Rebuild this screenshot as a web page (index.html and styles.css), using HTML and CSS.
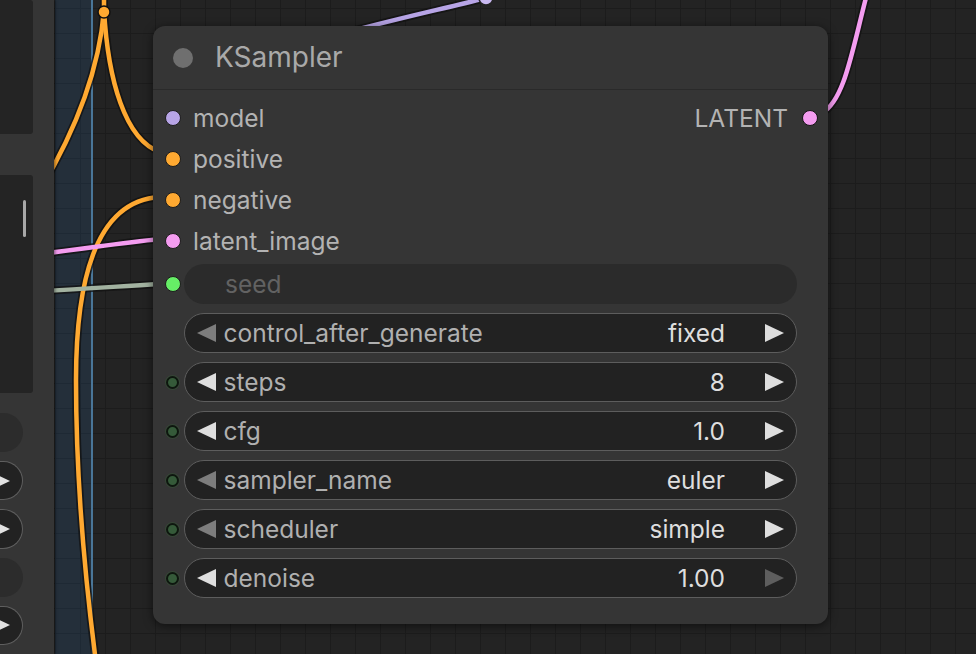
FILE: index.html
```html
<!DOCTYPE html>
<html>
<head>
<meta charset="utf-8">
<link rel="stylesheet" href="styles.css">
</head>
<body>
<div class="canvas">
  <div class="group"></div>

  <svg class="links" width="976" height="654" viewBox="0 0 976 654">
    <g fill="none" stroke="#111" stroke-opacity="0.75" stroke-width="8" stroke-linecap="round">
      <path d="M104,10 C100,60 82,120 40,190"/>
      <path d="M104,10 C108,80 125,140 160,152"/>
      <path d="M104,-20 L104,10"/>
      <path d="M160,197 C105,200 76,260 76,380 C76,480 85,580 97,670"/>
      <path d="M160,239 C120,243 90,248 40,254"/>
      <path d="M160,284 C120,286 90,289 40,291"/>
      <path d="M300,45 C380,22 430,12 486,-2"/>
      <path d="M822,113 C845,100 852,50 868,-10"/>
    </g>
    <g fill="none" stroke-width="4.5" stroke-linecap="round">
      <path stroke="#ffa931" d="M104,10 C100,60 82,120 40,190"/>
      <path stroke="#ffa931" d="M104,10 C108,80 125,140 160,152"/>
      <path stroke="#ffa931" d="M104,-20 L104,10"/>
      <path stroke="#ffa931" d="M160,197 C105,200 76,260 76,380 C76,480 85,580 97,670"/>
      <path stroke="#f49cf0" d="M160,239 C120,243 90,248 40,254"/>
      <path stroke="#a2b2a0" d="M160,284 C120,286 90,289 40,291"/>
      <path stroke="#b7a4e6" d="M300,45 C380,22 430,12 486,-2"/>
      <path stroke="#f49cf0" d="M822,113 C845,100 852,50 868,-10"/>
    </g>
    <circle cx="104" cy="12" r="6" fill="#ffa931" stroke="#111" stroke-width="1.5"/>
    <circle cx="486" cy="-2" r="7" fill="#c8b8f0" stroke="#222" stroke-width="1.5"/>
  </svg>

  <div class="lnode">
    <div class="ltext ltext-top"></div>
    <div class="ltext ltext-mid"><span class="lscroll"></span></div>
    <div class="lwidget plain"></div>
    <div class="lwidget"><svg class="larrow" width="10" height="18" viewBox="0 0 10 18"><polygon points="-9,0 10,9 -9,18" fill="#e2e2e2"/></svg></div>
    <div class="lwidget"><svg class="larrow" width="10" height="18" viewBox="0 0 10 18"><polygon points="-9,0 10,9 -9,18" fill="#e2e2e2"/></svg></div>
    <div class="lwidget plain"></div>
    <div class="lwidget"><svg class="larrow" width="10" height="18" viewBox="0 0 10 18"><polygon points="-9,0 10,9 -9,18" fill="#e2e2e2"/></svg></div>
  </div>

  <div class="ks">
    <div class="ks-title">
      <span class="tdot"></span>
      <span class="ttext">KSampler</span>
    </div>
    <div class="ks-body">
      <div class="io">
        <span class="slot c-model"></span><span class="lbl">model</span>
        <span class="out">LATENT</span><span class="oslot c-latent"></span>
      </div>
      <div class="io"><span class="slot c-cond"></span><span class="lbl">positive</span></div>
      <div class="io"><span class="slot c-cond"></span><span class="lbl">negative</span></div>
      <div class="io"><span class="slot c-latent"></span><span class="lbl">latent_image</span></div>

      <div class="widgets">
        <div class="wrow">
          <span class="wslot"><span class="slot c-int"></span></span>
          <div class="pill seed"><span class="wlabel">seed</span></div>
        </div>
        <div class="wrow">
          <span class="wslot"></span>
          <div class="pill">
            <svg class="arr" width="19" height="18" viewBox="0 0 19 18"><polygon points="0,9 19,0 19,18" class="dim"/></svg>
            <span class="wlabel">control_after_generate</span>
            <span class="wval">fixed</span>
            <svg class="arr" width="19" height="18" viewBox="0 0 19 18"><polygon points="0,0 19,9 0,18" class="bright"/></svg>
          </div>
        </div>
        <div class="wrow">
          <span class="wslot"><span class="ring"></span></span>
          <div class="pill">
            <svg class="arr" width="19" height="18" viewBox="0 0 19 18"><polygon points="0,9 19,0 19,18" class="bright"/></svg>
            <span class="wlabel">steps</span>
            <span class="wval">8</span>
            <svg class="arr" width="19" height="18" viewBox="0 0 19 18"><polygon points="0,0 19,9 0,18" class="bright"/></svg>
          </div>
        </div>
        <div class="wrow">
          <span class="wslot"><span class="ring"></span></span>
          <div class="pill">
            <svg class="arr" width="19" height="18" viewBox="0 0 19 18"><polygon points="0,9 19,0 19,18" class="bright"/></svg>
            <span class="wlabel">cfg</span>
            <span class="wval">1.0</span>
            <svg class="arr" width="19" height="18" viewBox="0 0 19 18"><polygon points="0,0 19,9 0,18" class="bright"/></svg>
          </div>
        </div>
        <div class="wrow">
          <span class="wslot"><span class="ring"></span></span>
          <div class="pill">
            <svg class="arr" width="19" height="18" viewBox="0 0 19 18"><polygon points="0,9 19,0 19,18" class="dim"/></svg>
            <span class="wlabel">sampler_name</span>
            <span class="wval">euler</span>
            <svg class="arr" width="19" height="18" viewBox="0 0 19 18"><polygon points="0,0 19,9 0,18" class="bright"/></svg>
          </div>
        </div>
        <div class="wrow">
          <span class="wslot"><span class="ring"></span></span>
          <div class="pill">
            <svg class="arr" width="19" height="18" viewBox="0 0 19 18"><polygon points="0,9 19,0 19,18" class="dim"/></svg>
            <span class="wlabel">scheduler</span>
            <span class="wval">simple</span>
            <svg class="arr" width="19" height="18" viewBox="0 0 19 18"><polygon points="0,0 19,9 0,18" class="bright"/></svg>
          </div>
        </div>
        <div class="wrow">
          <span class="wslot"><span class="ring"></span></span>
          <div class="pill">
            <svg class="arr" width="19" height="18" viewBox="0 0 19 18"><polygon points="0,9 19,0 19,18" class="bright"/></svg>
            <span class="wlabel">denoise</span>
            <span class="wval">1.00</span>
            <svg class="arr" width="19" height="18" viewBox="0 0 19 18"><polygon points="0,0 19,9 0,18" class="dimmer"/></svg>
          </div>
        </div>
      </div>
    </div>
  </div>
</div>
</body>
</html>
```

FILE: styles.css
```css
* { box-sizing: border-box; }

html, body {
  margin: 0;
  padding: 0;
  background: #222;
}

.canvas {
  position: relative;
  width: 976px;
  height: 654px;
  overflow: hidden;
  font-family: Inter, "Liberation Sans", sans-serif;
  background-color: #232323;
  background-image:
    linear-gradient(#1c1c1c 1px, transparent 1px),
    linear-gradient(90deg, #1c1c1c 1px, transparent 1px);
  background-size: 25px 25px;
  background-position: 5px 8px;
}

.group {
  position: absolute;
  left: 55px;
  top: 0;
  width: 38px;
  height: 654px;
  background: rgba(40, 90, 140, 0.22);
  border-right: 2px solid #4a7698;
}

.links {
  position: absolute;
  left: 0;
  top: 0;
}

/* left, partially visible node */
.lnode {
  position: absolute;
  left: 0;
  top: 0;
  width: 54px;
  height: 654px;
  background: #353535;
  display: flex;
  flex-direction: column;
  overflow: hidden;
  box-shadow: 1px 0 3px rgba(0,0,0,0.5);
}

.ltext {
  width: 33px;
  background: #242424;
  border-radius: 0 3px 3px 0;
}

.ltext-top { height: 137px; }

.ltext-mid {
  position: relative;
  height: 222px;
  margin-top: 41px;
}

.lscroll {
  position: absolute;
  left: 23px;
  top: 25px;
  width: 3px;
  height: 37px;
  border-radius: 2px;
  background: #a8a8a8;
}

.lwidget {
  width: 23px;
  height: 40px;
  margin-bottom: 9px;
  background: #222;
  border: 1.5px solid #5f5f5f;
  border-left: none;
  border-radius: 0 20px 20px 0;
  display: flex;
  align-items: center;
}

.lwidget:nth-child(3) { margin-top: 20px; }

.lwidget.plain {
  background: #2c2c2c;
  border-color: transparent;
}

.larrow { display: block; }

/* KSampler node */
.ks {
  position: absolute;
  left: 153px;
  top: 26px;
  width: 675px;
  height: 598px;
  background: #353535;
  border-radius: 12px;
  box-shadow: 0 2px 10px rgba(0,0,0,0.55);
}

.ks-title {
  height: 64px;
  border-bottom: 1px solid #2a2a2a;
  display: flex;
  align-items: center;
  padding-left: 20px;
}

.tdot {
  width: 20px;
  height: 20px;
  border-radius: 50%;
  background: #6f6f6f;
  margin-right: 22px;
}

.ttext {
  font-size: 28px;
  color: #a9a9a9;
  margin-top: -2px;
}

.ks-body {
  padding-top: 7px;
}

.io {
  height: 41px;
  display: flex;
  align-items: center;
  font-size: 24.5px;
  color: #b3b3b3;
}

.slot {
  width: 16px;
  height: 16px;
  border-radius: 50%;
  margin-left: 12px;
  margin-right: 12px;
  border: 1.5px solid #1c1c1c;
  flex: none;
}

.c-model { background: #b7a4e6; }
.c-cond { background: #ffa931; }
.c-latent { background: #f49cf0; }
.c-int { background: #66ee66; margin-right: 0; }

.out {
  margin-left: auto;
}

.oslot {
  width: 16px;
  height: 16px;
  border-radius: 50%;
  border: 1.5px solid #151515;
  margin-left: 14px;
  margin-right: 10px;
}

.widgets {
  margin-top: 3px;
  display: flex;
  flex-direction: column;
  gap: 9px;
}

.wrow {
  height: 40px;
  display: flex;
  align-items: center;
}

.wslot {
  width: 31px;
  height: 40px;
  display: flex;
  align-items: center;
  flex: none;
}

.ring {
  width: 13px;
  height: 13px;
  margin-left: 13px;
  border-radius: 50%;
  background: #355a39;
  border: 2px solid #0e170f;
  box-shadow: 0 0 0 1px rgba(60, 110, 60, 0.3);
}

.pill {
  width: 613px;
  height: 40px;
  border-radius: 20px;
  background: #222;
  border: 1.5px solid #5d5d5d;
  display: flex;
  align-items: center;
  padding: 0 12px 0 11.5px;
  font-size: 24.5px;
}

.pill.seed {
  background: #2b2b2b;
  border-color: transparent;
  padding-left: 40px;
}

.pill.seed .wlabel {
  color: #626262;
  margin-left: 0;
}

.arr { display: block; flex: none; }
.bright { fill: #dedede; }
.dim { fill: #7d7d7d; }
.dimmer { fill: #5e5e5e; }

.wlabel {
  margin-left: 8px;
  color: #b0b0b0;
  flex: 1;
}

.wval {
  color: #dedede;
  margin-right: 40px;
}
```
